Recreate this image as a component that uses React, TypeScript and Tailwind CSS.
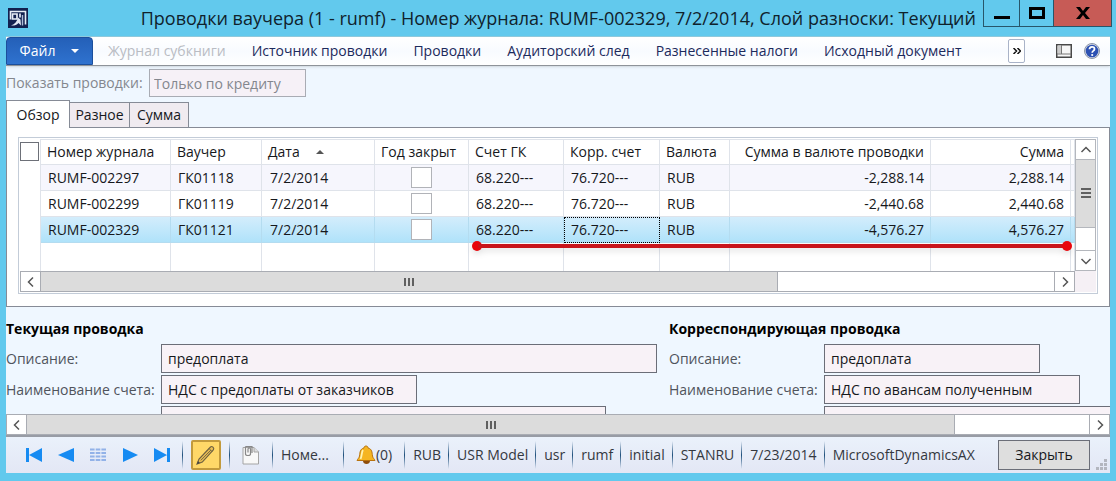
import { ReactNode } from "react";

interface Voucher {
  journal: string;
  voucher: string;
  date: string;
  account: string;
  offset: string;
  currency: string;
  amountCur: string;
  amount: string;
}

const vouchers: Voucher[] = [
  { journal: "RUMF-002297", voucher: "ГК01118", date: "7/2/2014", account: "68.220---", offset: "76.720---", currency: "RUB", amountCur: "-2,288.14", amount: "2,288.14" },
  { journal: "RUMF-002299", voucher: "ГК01119", date: "7/2/2014", account: "68.220---", offset: "76.720---", currency: "RUB", amountCur: "-2,440.68", amount: "2,440.68" },
  { journal: "RUMF-002329", voucher: "ГК01121", date: "7/2/2014", account: "68.220---", offset: "76.720---", currency: "RUB", amountCur: "-4,576.27", amount: "4,576.27" },
];

const menuItems = ["Источник проводки", "Проводки", "Аудиторский след", "Разнесенные налоги", "Исходный документ"];

const statusItems = ["RUB", "USR Model", "usr", "rumf", "initial", "STANRU", "7/23/2014", "MicrosoftDynamicsAX"];

function AppLogo() {
  return (
    <svg viewBox="0 0 20 20" className="h-5 w-5 shrink-0">
      <rect width="20" height="20" fill="#12204f" />
      <path d="M2.500 11.500V3.500h15v13" fill="none" stroke="#e8edf6" strokeWidth="1.600" />
      <path d="M4.500 6h4.500v5H4.500zM12 5.500v4" fill="none" stroke="#e8edf6" strokeWidth="1.700" />
      <path d="M3 17.500c4-1.500 6-4 7-8l2.500 2 .5 6-2.500-2.500c-2 2-4 2.800-7.500 2.500z" fill="#dfe6f2" />
      <path d="M14.500 7v10.500" stroke="#aebbd6" strokeWidth="1.400" />
    </svg>
  );
}

function Chevron({ d }: { d: string }) {
  return (
    <svg viewBox="0 0 12 12" className="h-3 w-3">
      <path d={d} fill="none" stroke="#555" strokeWidth="1.5" />
    </svg>
  );
}

const LEFT = "M8 1.5 3.5 6 8 10.5";
const RIGHT = "M4 1.5 8.5 6 4 10.5";
const UP = "M1.5 8 6 3.5 10.5 8";
const DOWN = "M1.5 4 6 8.5 10.5 4";

function HScrollbar({ thumb }: { thumb: string }) {
  return (
    <div className="flex h-[21px] shrink-0 border border-[#a9acb3] bg-white">
      <button aria-label="Влево" className="flex w-5 shrink-0 items-center justify-center border-r border-[#a9acb3]">
        <Chevron d={LEFT} />
      </button>
      <div className="flex-1">
        <div className={`flex h-full items-center justify-center gap-0.5 border-r border-[#a9acb3] bg-[#dcdcdc] ${thumb}`}>
          <span className="h-2 w-0.5 bg-[#606060]" />
          <span className="h-2 w-0.5 bg-[#606060]" />
          <span className="h-2 w-0.5 bg-[#606060]" />
        </div>
      </div>
      <button aria-label="Вправо" className="flex w-5 shrink-0 items-center justify-center border-l border-[#a9acb3]">
        <Chevron d={RIGHT} />
      </button>
    </div>
  );
}

function VScrollbar() {
  return (
    <div className="flex w-[21px] shrink-0 flex-col border border-[#b4b7bd] bg-white">
      <button aria-label="Вверх" className="flex h-5 items-center justify-center border-b border-[#b4b7bd]">
        <Chevron d={UP} />
      </button>
      <div className="flex-1">
        <div className="flex h-3/4 flex-col items-center justify-center gap-0.5 border-b border-[#b4b7bd] bg-[#dcdcdc]">
          <span className="h-0.5 w-2.5 bg-[#606060]" />
          <span className="h-0.5 w-2.5 bg-[#606060]" />
          <span className="h-0.5 w-2.5 bg-[#606060]" />
        </div>
      </div>
      <button aria-label="Вниз" className="flex h-5 items-center justify-center border-t border-[#b4b7bd]">
        <Chevron d={DOWN} />
      </button>
    </div>
  );
}

function TitleBar() {
  return (
    <header className="flex h-9 shrink-0 pr-1 pl-2">
      <div className="flex items-center">
        <AppLogo />
      </div>
      <h1 className="ml-auto self-center pr-[7px] text-lg whitespace-nowrap text-[#10222c]">
        Проводки ваучера (1 - rumf) - Номер журнала: RUMF-002329, 7/2/2014, Слой разноски: Текущий
      </h1>
      <div className="flex h-[27px] border border-t-0 border-[#27566a]">
        <button aria-label="Свернуть" className="flex w-9 items-center justify-center border-r border-[#27566a] pt-2">
          <span className="h-[3px] w-4 bg-black" />
        </button>
        <button aria-label="Развернуть" className="flex w-[33px] items-center justify-center">
          <span className="h-3 w-4 border-3 border-black" />
        </button>
        <button aria-label="Закрыть окно" className="flex w-[58px] items-center justify-center border-l border-[#27566a] bg-[#c75b56]">
          <svg viewBox="0 0 14 12" className="h-3 w-3.5">
            <path d="M0 0h4l3 4 3-4h4L9 6l5 6h-4L7 8l-3 4H0l5-6z" fill="#000" />
          </svg>
        </button>
      </div>
    </header>
  );
}

function MenuBar() {
  return (
    <nav className="flex h-[30px] shrink-0 items-center border-y border-t-[#8fc9dc] border-b-[#8e9399] bg-gradient-to-b from-white via-[#f8fbff] to-white text-sm text-[#1c2a5c] shadow-sm">
      <button className="flex h-full w-[87px] items-center justify-center gap-4 rounded-t-sm border border-[#1b4f9c] bg-gradient-to-b from-[#2460b8] to-[#2f72cf] text-white">
        Файл
        <svg viewBox="0 0 8 4" className="h-1 w-2">
          <path d="M0 0h8L4 4z" fill="#fff" />
        </svg>
      </button>
      <div className="flex flex-1 gap-[26px] pl-[15px] whitespace-nowrap">
        <button disabled className="text-[#b9bcc3]">Журнал субкниги</button>
        {menuItems.map((item) => (
          <button key={item}>{item}</button>
        ))}
      </div>
      <div className="flex items-center pr-[10px]">
        <button aria-label="Ещё" className="mr-[31px] flex h-6 w-[17px] items-center justify-center rounded-xs border border-[#a9b3c8] bg-white">
          <svg viewBox="0 0 8 6" className="h-1.5 w-2">
            <path d="M.5 0 3.500 3l-3 3M4.500 0l3 3-3 3" fill="none" stroke="#111" strokeWidth="1.500" />
          </svg>
        </button>
        <button aria-label="Вид" className="mr-3">
          <svg viewBox="0 0 16 14" className="h-3.5 w-4">
            <rect x=".75" y=".75" width="14.5" height="12.500" fill="#f6f6f6" stroke="#484848" strokeWidth="1.5" />
            <path d="M1.500 1.500h3.500v8H1.500z" fill="#ccc" />
            <path d="M5.500 1v9M1 10h14" stroke="#777" />
          </svg>
        </button>
        <button aria-label="Справка">
          <svg viewBox="0 0 16 16" className="h-4 w-4">
            <circle cx="8" cy="8" r="7.500" fill="#d4d9e4" stroke="#8c95a8" />
            <circle cx="8" cy="8" r="6.300" fill="#2c51b3" />
            <path d="M5.500 6.300C5.500 3 10.500 3 10.500 6c0 2-2.300 1.800-2.300 3.700" fill="none" stroke="#fff" strokeWidth="1.800" />
            <circle cx="8.200" cy="12" r="1.100" fill="#fff" />
          </svg>
        </button>
      </div>
    </nav>
  );
}

function HeadCell({ children, className = "" }: { children?: ReactNode; className?: string }) {
  return <th className={`h-[25px] border-r border-b border-[#dfe3ea] px-1.5 text-left font-normal ${className}`}>{children}</th>;
}

function VoucherGrid() {
  return (
    <div className="mx-[11px] border border-[#c3ccd8] bg-white p-px">
      <div className="flex">
        <div className="w-5 shrink-0 pt-[3px]">
          <input type="checkbox" aria-label="Выбрать все" className="block h-[19px] w-[19px] appearance-none border border-[#6d7078] bg-white" />
        </div>
        <div className="relative min-w-0 flex-1">
          <table className="w-full table-fixed border-separate border-spacing-0 border-t border-l border-[#dfe3ea] text-sm whitespace-nowrap text-[#16181c]">
            <colgroup>
              <col className="w-[130px]" />
              <col className="w-[91px]" />
              <col className="w-[113px]" />
              <col className="w-[94px]" />
              <col className="w-[95px]" />
              <col className="w-[96px]" />
              <col className="w-[70px]" />
              <col />
              <col className="w-[140px]" />
              <col className="w-1" />
            </colgroup>
            <thead>
              <tr>
                <HeadCell>Номер журнала</HeadCell>
                <HeadCell>Ваучер</HeadCell>
                <HeadCell>
                  <span className="flex items-center gap-4">
                    Дата
                    <svg viewBox="0 0 8 4" className="h-1 w-2">
                      <path d="M0 4h8L4 0z" fill="#555" />
                    </svg>
                  </span>
                </HeadCell>
                <HeadCell>Год закрыт</HeadCell>
                <HeadCell>Счет ГК</HeadCell>
                <HeadCell>Корр. счет</HeadCell>
                <HeadCell>Валюта</HeadCell>
                <HeadCell className="text-right">Сумма в валюте проводки</HeadCell>
                <HeadCell className="text-right">Сумма</HeadCell>
                <HeadCell className="px-0" />
              </tr>
            </thead>
            <tbody>
              {vouchers.map((v, i) => {
                const active = i === 2;
                return (
                  <tr
                    key={v.journal}
                    className={
                      active
                        ? "bg-gradient-to-b from-[#d3edfc] to-[#aee2fa] [&>td]:border-[#b4dcf0]"
                        : "odd:bg-[#f6f6fd] [&>td]:border-[#dfe3ea]"
                    }
                  >
                    <td className="h-[26px] border-r border-b px-[7px]">{v.journal}</td>
                    <td className="border-r border-b px-[7px]">{v.voucher}</td>
                    <td className="border-r border-b px-2">{v.date}</td>
                    <td className="border-r border-b">
                      <input type="checkbox" aria-label={`Год закрыт ${v.voucher}`} className="mx-auto block h-[21px] w-[21px] appearance-none border border-[#b1b3b8] bg-white" />
                    </td>
                    <td className="border-r border-b px-[7px]">{v.account}</td>
                    <td className={`border-r border-b px-[7px] ${active ? "outline-1 -outline-offset-1 outline-dotted outline-black" : ""}`}>{v.offset}</td>
                    <td className="border-r border-b px-[7px]">{v.currency}</td>
                    <td className="border-r border-b px-1.5 text-right">{v.amountCur}</td>
                    <td className="border-r border-b px-1.5 text-right">{v.amount}</td>
                    <td className="border-r border-b" />
                  </tr>
                );
              })}
              <tr>
                {Array.from({ length: 10 }, (_, i) => (
                  <td key={i} className="h-7 border-r border-[#dfe3ea]" />
                ))}
              </tr>
            </tbody>
          </table>
          {/* red marker under the active row */}
          <div className="absolute right-[3px] bottom-5 left-[432px] flex items-center drop-shadow-md">
            <span className="h-2.5 w-2.5 rounded-full bg-[#e8060c]" />
            <span className="-mx-1 h-1 flex-1 bg-[#c9151b]" />
            <span className="h-2.5 w-2.5 rounded-full bg-[#e8060c]" />
          </div>
        </div>
        <VScrollbar />
      </div>
      <div className="bg-[#f5f0f5] pr-[21px]">
        <HScrollbar thumb="w-[737px]" />
      </div>
    </div>
  );
}

function Field({ id, label, value, width }: { id: string; label: string; value: string; width: string }) {
  return (
    <div className="flex h-[29px] shrink-0 items-center">
      <label htmlFor={id} className="w-[155px] shrink-0 whitespace-nowrap text-[#4f545c]">{label}</label>
      <input id={id} readOnly defaultValue={value} className={`h-full shrink-0 border border-[#6b6e78] bg-[#f8f2f7] px-1.5 text-[#16181c] ${width}`} />
    </div>
  );
}

function Details() {
  return (
    <div className="flex h-[107px] shrink-0 overflow-hidden pt-2 text-sm">
      <section className="flex w-[663px] shrink-0 flex-col gap-0.5">
        <h2 className="h-[27px] shrink-0 leading-7 font-bold text-black">Текущая проводка</h2>
        <Field id="desc" label="Описание:" value="предоплата" width="w-[496px]" />
        <Field id="acc" label="Наименование счета:" value="НДС с предоплаты от заказчиков" width="w-[256px]" />
        <Field id="extra" label="" value="" width="w-[445px]" />
      </section>
      <section className="flex flex-col gap-0.5">
        <h2 className="h-[27px] shrink-0 leading-7 font-bold whitespace-nowrap text-black">Корреспондирующая проводка</h2>
        <Field id="desc2" label="Описание:" value="предоплата" width="w-[216px]" />
        <Field id="acc2" label="Наименование счета:" value="НДС по авансам полученным" width="w-[256px]" />
        <Field id="extra2" label="" value="" width="w-[320px]" />
      </section>
    </div>
  );
}

function Divider() {
  return <span className="h-7 w-px shrink-0 bg-gradient-to-b from-transparent via-[#1d4f7c] to-transparent" />;
}

function StatusBar() {
  return (
    <footer className="flex flex-1 items-center border-t-2 border-[#989ca5] bg-gradient-to-b from-[#eaf1fb] to-[#e3e7f5] pr-0.5 pl-5 text-sm whitespace-nowrap text-[#34383f]">
      <div className="flex items-center gap-4">
        <button aria-label="Первая запись">
          <svg viewBox="0 0 16 16" className="h-4 w-4">
            <path d="M0 1h3v14H0zM16 1v14L3 8z" fill="#168bf2" />
          </svg>
        </button>
        <button aria-label="Предыдущая запись">
          <svg viewBox="0 0 16 16" className="h-4 w-4">
            <path d="M16 1v14L0 8z" fill="#168bf2" />
          </svg>
        </button>
        <button aria-label="Таблица">
          <svg viewBox="0 0 16 16" className="h-4 w-4">
            <path d="M0 2.500h16M0 6h16M0 9.500h16M0 13h16" stroke="#92b2e8" strokeWidth="2.200" strokeDasharray="4.600 1.100" />
          </svg>
        </button>
        <button aria-label="Следующая запись">
          <svg viewBox="0 0 16 16" className="h-4 w-4">
            <path d="M1 1v14l15-7z" fill="#168bf2" />
          </svg>
        </button>
        <button aria-label="Последняя запись">
          <svg viewBox="0 0 16 16" className="h-4 w-4">
            <path d="M0 1v14l13-7zM13 1h3v14h-3z" fill="#168bf2" />
          </svg>
        </button>
      </div>
      <div className="ml-3 flex items-center gap-2">
        <Divider />
        <button aria-label="Правка" className="flex h-[30px] w-[30px] items-center justify-center rounded-xs border-2 border-[#c29a3c] bg-[#ffd868]">
          <svg viewBox="0 0 20 20" className="h-5 w-5">
            <path d="M1 19l2-5L14.500 2c1.500-1.500 4 1 3 2.700L6.300 17z" fill="#e8bd52" stroke="#6d6040" strokeWidth="1.100" />
            <path d="M13 3.500l3.300 3.300M4.800 15.300 15 5" stroke="#7a6a45" fill="none" />
            <path d="M1 19l1-3 2 2z" fill="#444" />
          </svg>
        </button>
        <Divider />
      </div>
      <button aria-label="Документы" className="mx-3">
        <svg viewBox="0 0 18 20" className="h-5 w-[18px]">
          <path d="M1 2.500h11l4.500 4.500v12H1z" fill="#f8f8f8" stroke="#a4a4a4" />
          <path d="M12 2.500v4.500h4.500" fill="#ddd" stroke="#a4a4a4" />
          <path d="M3.500 1.500V9c0 2 5 2 5 0V4c0-1.500-2.500-1.500-2.500 0v3.500M3.500 1.500h6.500V8" fill="none" stroke="#888" strokeWidth="1.200" />
        </svg>
      </button>
      <Divider />
      <span className="pr-3.5 pl-2">Номе...</span>
      <Divider />
      <button className="flex items-center px-3">
        <svg viewBox="0 0 20 20" className="h-5 w-5">
          <path d="M10 1c1.500 0 2 1 2 2 4 1 4 4 4.500 8 .3 2 2 3 2.500 4.500H1C1.500 14 3.200 13 3.500 11 4 7 4 4 8 3c0-1 .5-2 2-2z" fill="#f5b521" stroke="#b9730f" />
          <path d="M7 5C5.500 7 6 11 4.500 14" stroke="#fff3b0" strokeWidth="1.800" fill="none" />
          <path d="M7 16h7c0 4-7 4-7 0z" fill="#8f4d0b" />
        </svg>
        (0)
      </button>
      <div className="flex flex-1 items-center gap-[7px]">
        {statusItems.map((text) => (
          <span key={text} className="flex items-center gap-2">
            <Divider />
            {text}
          </span>
        ))}
      </div>
      <button className="h-[30px] w-[92px] shrink-0 border border-[#6b6e78] bg-[#dedede] text-[#16181c]">Закрыть</button>
      <svg viewBox="0 0 14 14" className="ml-1 h-3.5 w-3.5 shrink-0 self-end">
        <path d="M10 0h3v3h-3zM10 4h3v3h-3zM10 8h3v3h-3zM6 4h3v3H6zM6 8h3v3H6zM2 8h3v3H2z" fill="#b3b6bf" />
      </svg>
    </footer>
  );
}

export default function App() {
  return (
    <div className="flex min-h-screen flex-col overflow-hidden bg-[#62c9ed] font-['Open_Sans','Noto_Sans',sans-serif]">
      <TitleBar />
      <main className="mx-1.5 mb-2 flex flex-1 flex-col overflow-hidden bg-[#eff7ff]">
        <MenuBar />
        <div className="flex items-center gap-0.5 pt-[3px] text-sm text-[#84878e]">
          <label htmlFor="show" className="w-[141px] whitespace-nowrap">Показать проводки:</label>
          <input id="show" disabled defaultValue="Только по кредиту" className="h-7 w-[157px] border border-[#a9acb4] bg-[#f6f1f7] px-1" />
        </div>
        <div role="tablist" className="relative z-10 -mb-px flex items-end pt-[3px] text-sm text-[#16181c]">
          <button role="tab" aria-selected="true" className="h-7 w-16 border border-b-0 border-[#868b96] bg-white">Обзор</button>
          <button role="tab" className="h-[26px] w-[60px] border border-l-0 border-[#868b96] bg-[#f0ebf0]">Разное</button>
          <button role="tab" className="h-[26px] w-[59px] border border-l-0 border-[#868b96] bg-[#f0ebf0]">Сумма</button>
        </div>
        <div className="border border-[#868b96] bg-white pt-[9px] pb-3">
          <VoucherGrid />
        </div>
        <Details />
        <HScrollbar thumb="w-[928px]" />
        <StatusBar />
      </main>
    </div>
  );
}
